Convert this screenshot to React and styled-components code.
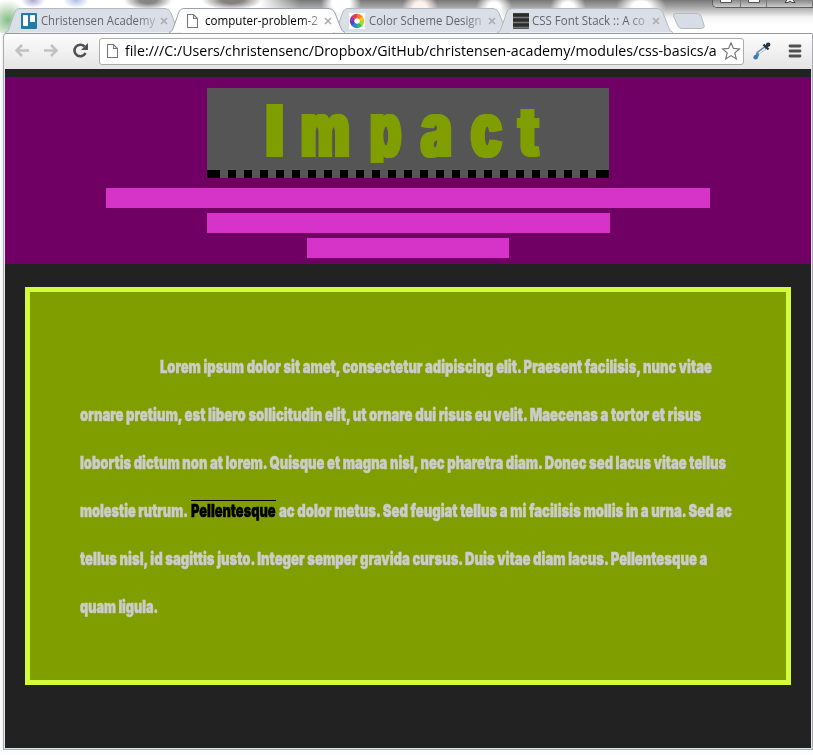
import React, { useLayoutEffect, useRef } from "react";
import styled, { createGlobalStyle } from "styled-components";

const Global = createGlobalStyle`
  * { box-sizing: border-box; }
  body { margin: 0; background: #fbfcfe; overflow: hidden; }
`;

const Desktop = styled.div`
  width: 813px;
  height: 755px;
  display: flex;
  flex-direction: column;
  overflow: hidden;
  font-family: "Open Sans", "Noto Sans", sans-serif;
  background: linear-gradient(90deg, #fff, #eef1f4 3px, #fff 5px) no-repeat 0 0 / 5px 748px, #fcfdff;
`;

const TitleBar = styled.div`
  flex: none;
  height: 33px;
  display: flex;
  align-items: flex-end;
  justify-content: space-between;
  background:
    radial-gradient(ellipse 20px 20px at 8px 20px, #86bd85, #a6d0a500 ),
    radial-gradient(ellipse 12px 8px at 33px 0, #aaa5ce, #aaa5ce00),
    radial-gradient(ellipse 13px 8px at 76px 0, #aebde8, #aebde800),
    radial-gradient(ellipse 20px 19px at 341px 3px, #fff 45%, #fff0),
    radial-gradient(ellipse 18px 17px at 420px 8px, #fff3ef 35%, #fff0),
    radial-gradient(ellipse 18px 17px at 494px 8px, #fff 35%, #fff0),
    radial-gradient(ellipse 18px 17px at 568px 8px, #fff 35%, #fff0),
    radial-gradient(ellipse 25px 16px at 641px 7px, #fff 35%, #fff0),
    radial-gradient(ellipse 24px 10px at 148px 0, #858585 35%, #85858500),
    radial-gradient(ellipse 30px 10px at 232px 0, #858080 35%, #85808000),
    linear-gradient(90deg, #fff 260px, #fff0 300px),
    linear-gradient(#777 0, #a5a5a5 7px, #f3f3f3 17px, #fff 25px);
`;

const Tabs = styled.div`
  display: flex;
  height: 25px;
  padding-left: 5px;
`;

const TabBox = styled.div`
  position: relative;
  z-index: ${(p) => (p.$active ? 2 : 1)};
  width: 176px;
  height: 25px;
  margin-right: -12px;
  padding: 0 5px 0 16px;
  display: flex;
  align-items: center;
`;

const TabShape = styled.svg`
  position: absolute;
  inset: 0;
`;

const Favicon = styled.svg`
  position: relative;
  flex: none;
  width: 16px;
  height: 16px;
  margin-right: ${(p) => p.$gap}px;
`;

const TabTitle = styled.div`
  position: relative;
  flex: 1;
  height: 18px;
  font-size: 12px;
  line-height: 17px;
  color: ${(p) => (p.$active ? "#000" : "#63666b")};
  mask-image: linear-gradient(90deg, #000 82%, #0004 100%);
`;

const CloseMark = styled.svg`
  position: relative;
  flex: none;
  width: 8px;
  height: 8px;
  margin: 0 8px 0 3px;
`;

const NewTab = styled.svg`
  width: 34px;
  height: 18px;
  margin: 4px 0 0 11px;
`;

const WindowButtons = styled.div`
  align-self: flex-start;
  display: flex;
  width: 101px;
  height: 8px;
  overflow: hidden;
  border: 1px solid #5c5c5c;
  border-top: 0;
  border-right: 0;
  border-radius: 0 0 0 5px;
  background: #aaa;
`;

const WindowButton = styled.div`
  width: ${(p) => p.$width}px;
  height: 7px;
  display: flex;
  justify-content: center;
  border-right: 1px solid #777;
  background: linear-gradient(#888, #ccc);
`;

const Frame = styled.div`
  flex: none;
  width: 810px;
  height: 717px;
  margin-left: 3px;
  border: 1px solid #a9abae;
  border-top-color: #98999c;
  border-radius: 4px 2px 0 0;
  background: #eee;
`;

const Toolbar = styled.div`
  height: 35px;
  display: flex;
  align-items: center;
  padding: 0 9px 0 10px;
  background: linear-gradient(#fdfdfd, #e5e5e5);
  border-radius: 4px 2px 0 0;
  border-bottom: 1px solid #c6c6c8;
`;

const ToolIcon = styled.svg`
  flex: none;
  width: ${(p) => p.$width}px;
  height: 18px;
  margin-right: ${(p) => p.$gap}px;
`;

const AddressBar = styled.div`
  width: 645px;
  height: 27px;
  display: flex;
  align-items: center;
  padding: 0 2px 0 5px;
  margin-right: 9px;
  border: 1px solid #aaacaf;
  border-radius: 3px;
  background: #fff;
`;

const Url = styled.div`
  flex: none;
  width: 596px;
  height: 24px;
  font-size: 15px;
  line-height: 23px;
  color: #000;
`;

const Page = styled.main`
  height: 679px;
  margin: 0 0 0 1px;
  width: 806px;
  padding-top: 8px;
  background: #222;
  font-family: Inter, "Open Sans", sans-serif;
  box-shadow: 0 0 0 1px #e6e6e6;
`;

const Banner = styled.header`
  height: 187px;
  padding-top: 11px;
  display: flex;
  flex-direction: column;
  align-items: center;
  background: #700064;
`;

const Heading = styled.h1`
  width: 402px;
  height: 90px;
  margin: 0 0 10px;
  display: flex;
  padding-left: 56px;
  font-weight: 900;
  color: #819e00;
  background:
    linear-gradient(#000, #000) no-repeat left bottom / 5px 8px,
    linear-gradient(#000, #000) no-repeat right bottom / 5px 8px,
    repeating-linear-gradient(90deg, #000 0 8px, #555 8px 16px) no-repeat 5px 82px / 392px 8px,
    #555;
`;

const Glyph = styled.span`
  width: ${(p) => p.$width}px;
  margin: ${(p) => p.$drop}px ${(p) => p.$gap}px 0 0;
  height: 82px;
  line-height: 82px;
  font-size: ${(p) => p.$size}px;
  clip-path: inset(0 -10px ${(p) => 7 + p.$drop}px -10px);
  text-shadow: ${(p) => p.$spread}px 0 currentColor, -${(p) => p.$spread}px 0 currentColor;
`;

const Bar = styled.div`
  flex: none;
  width: ${(p) => p.$width}px;
  height: 20px;
  margin-bottom: 5px;
  background: #d633c9;
`;

const Article = styled.article`
  width: 766px;
  height: 398px;
  margin: 23px 0 0 20px;
  padding: 50px;
  border: 5px solid #d4fa3c;
  background: #819e00;
`;

const Line = styled.div`
  height: 48px;
  display: flex;
  padding-left: ${(p) => p.$indent || 0}px;
  gap: 3px;
  font-size: 18px;
  font-weight: 900;
  line-height: 49px;
  color: #ccc;
  -webkit-text-stroke: 0.45px currentColor;
`;

const Highlight = styled.span`
  height: 22px;
  margin-top: 14px;
  border-top: 1px solid #000;
  line-height: 19px;
  color: #000;
  -webkit-text-stroke-color: #000;
`;

const FitBox = styled.span`
  display: block;
  flex: none;
  width: ${(p) => p.$width}px;
  white-space: nowrap;
`;

const FitInner = styled.span`
  display: inline-block;
  transform-origin: 0 50%;
`;

// Condenses a run of text horizontally so that it fills the given width.
function Fit({ width, children }) {
  const ref = useRef(null);
  useLayoutEffect(() => {
    const el = ref.current;
    const apply = () => {
      el.style.transform = `scaleX(${width / el.offsetWidth})`;
    };
    apply();
    document.fonts.ready.then(apply);
  }, [width, children]);
  return (
    <FitBox $width={width}>
      <FitInner ref={ref}>{children}</FitInner>
    </FitBox>
  );
}

const PageMark = () => (
  <path d="M2.5 1.5h6l4 4v9h-10zM8.5 1.5v4h4" fill="#fff" stroke="#777" strokeWidth="1.1" />
);

const TrelloMark = () => (
  <>
    <rect width="16" height="16" rx="1" fill="#237ba5" />
    <rect x="2" y="2" width="5" height="11" rx="0.7" fill="#fff" />
    <rect x="9" y="2" width="5" height="7" rx="0.7" fill="#fff" />
  </>
);

const wheel = ["#f4c80d", "#a5d82e", "#30b965", "#2a87d8", "#4948c4", "#9c36b4", "#ed3847", "#f87b20"];

const WheelMark = () => (
  <>
    <rect width="16" height="16" fill="#fff" />
    {wheel.map((c, i) => (
      <circle key={c} cx="8" cy="8" r="5" fill="none" stroke={c} strokeWidth="4.4"
        strokeDasharray="4.1 27.4" transform={`rotate(${i * 45 - 45} 8 8)`} />
    ))}
  </>
);

const StackMark = () => (
  <>
    <rect width="16" height="16" fill="#555" />
    <path d="M0 2h16M0 7h16M0 12h16" stroke="#2c2c2c" strokeWidth="3" />
    <path d="M0 4.5h16M0 9.5h16M0 14.5h16" stroke="#777" />
  </>
);

const tabs = [
  { title: "Christensen Academy", width: 114, gap: 4, Mark: TrelloMark },
  { title: "computer-problem-2", width: 113, gap: 4, Mark: PageMark, active: true },
  { title: "Color Scheme Design", width: 113, gap: 4, Mark: WheelMark },
  { title: "CSS Font Stack :: A co", width: 113, gap: 3, Mark: StackMark },
];

function Tab({ title, width, gap, Mark, active }) {
  return (
    <TabBox $active={active}>
      <TabShape width="176" height="25" viewBox="0 0 176 25">
        <path
          d="M0 24.5C3 24 3.5 22 5 18L9.5 5Q11 .5 15 .5H160Q164 .5 166 5L171 18Q173 24 176 24.5"
          fill={active ? "#fdfdfd" : "#d9dee7"}
          stroke={active ? "#9da2aa" : "#b4b9c1"}
        />
      </TabShape>
      <Favicon $gap={gap} viewBox="0 0 16 16"><Mark /></Favicon>
      <TabTitle $active={active}><Fit width={width}>{title}</Fit></TabTitle>
      <CloseMark viewBox="0 0 8 8">
        <path d="M1 1l6 6M7 1L1 7" stroke="#aaacb0" strokeWidth="1.6" />
      </CloseMark>
    </TabBox>
  );
}

const glyphs = [
  { c: "I", width: 23, gap: 15, size: 73, drop: 2, spread: 0 },
  { c: "m", width: 49, gap: 20, size: 78, drop: 0, spread: 3 },
  { c: "p", width: 31, gap: 20, size: 78, drop: 0, spread: 3 },
  { c: "a", width: 31, gap: 19, size: 78, drop: 0, spread: 3 },
  { c: "c", width: 31, gap: 16, size: 78, drop: 0, spread: 3 },
  { c: "t", width: 21, gap: 0, size: 70, drop: 2, spread: 2.5 },
];

export default function App() {
  return (
    <Desktop>
      <Global />
      <TitleBar>
        <Tabs>
          {tabs.map((t) => <Tab key={t.title} {...t} />)}
          <NewTab viewBox="0 0 34 18">
            <path d="M4 1.5H25Q28 1.5 29 4L32 13Q33 16.500 29 16.500H10Q7 16.500 6 14L1.500 4Q1 1.500 4 1.500Z" fill="#d7dde7" stroke="#b6babf" />
          </NewTab>
        </Tabs>
        <WindowButtons>
          <WindowButton $width={28}><svg width="12" height="4"><path d="M.5 0v2.500h11V0" fill="#fff" stroke="#555" /></svg></WindowButton>
          <WindowButton $width={27}><svg width="12" height="4"><path d="M.5 0v2.500h11V0" fill="#fff" stroke="#555" /></svg></WindowButton>
          <WindowButton $width={46}><svg width="12" height="4"><path d="M3 0L1 2.500h3L6 1l2 1.500h3L9 0" fill="#fff" stroke="#444" /></svg></WindowButton>
        </WindowButtons>
      </TitleBar>
      <Frame>
        <Toolbar>
          <ToolIcon $width={16} $gap={13} viewBox="0 0 16 18">
            <path d="M15 8.500H3M8 3L2.500 8.500 8 14" fill="none" stroke="#c1c1c1" strokeWidth="2.500" />
          </ToolIcon>
          <ToolIcon $width={16} $gap={13} viewBox="0 0 16 18">
            <path d="M1 8.500h12M8 3L13.500 8.500 8 14" fill="none" stroke="#c1c1c1" strokeWidth="2.500" />
          </ToolIcon>
          <ToolIcon $width={17} $gap={10} viewBox="0 0 17 18">
            <path d="M13.500 11A5.800 5.800 0 1 1 12.500 4.500" fill="none" stroke="#505050" strokeWidth="2.600" />
            <path d="M16 1V8H9z" fill="#505050" />
          </ToolIcon>
          <AddressBar>
            <Favicon $gap={4} viewBox="0 0 16 16"><PageMark /></Favicon>
            <Url><Fit width={592}>file:///C:/Users/christensenc/Dropbox/GitHub/christensen-academy/modules/css-basics/a</Fit></Url>
            <ToolIcon $width={20} $gap={0} viewBox="0 0 20 18">
              <path d="M10 .8l2.400 5.600 6 .5-4.600 4 1.500 6L10 13.600l-5.300 3.300 1.500-6-4.600-4 6-.5z" fill="#fff" stroke="#777" strokeWidth="1.200" />
            </ToolIcon>
          </AddressBar>
          <ToolIcon $width={18} $gap={17} viewBox="0 0 18 18">
            <path d="M12.500 5.500L5 11 3.500 15" fill="none" stroke="#6d8295" strokeWidth="3.400" />
            <path d="M12 6.500L5.500 11.500" stroke="#e1eef8" strokeWidth="1.600" />
            <path d="M5.500 11.500L3 15" stroke="#438ad2" strokeWidth="2" />
            <path d="M10.500 2.500l5 5M12.500 5l3-2.500" stroke="#26343f" strokeWidth="2.400" />
            <circle cx="15.200" cy="2.600" r="2.200" fill="#26343f" />
            <circle cx="2.700" cy="15.300" r="2.300" fill="#3d78b5" />
          </ToolIcon>
          <ToolIcon $width={14} $gap={0} viewBox="0 0 14 18">
            <path d="M2 4h10M2 9h10M2 14h10" stroke="#505050" strokeWidth="2.800" strokeLinecap="round" />
          </ToolIcon>
        </Toolbar>
        <Page>
          <Banner>
            <Heading>
              {glyphs.map((g) => (
                <Glyph key={g.c} $width={g.width} $gap={g.gap} $size={g.size} $drop={g.drop} $spread={g.spread}>
                  <Fit width={g.width}>{g.c}</Fit>
                </Glyph>
              ))}
            </Heading>
            <Bar $width={604} />
            <Bar $width={403} />
            <Bar $width={202} />
          </Banner>
          <Article>
            <Line $indent={80}><Fit width={552}>Lorem ipsum dolor sit amet, consectetur adipiscing elit. Praesent facilisis, nunc vitae</Fit></Line>
            <Line><Fit width={621}>ornare pretium, est libero sollicitudin elit, ut ornare dui risus eu velit. Maecenas a tortor et risus</Fit></Line>
            <Line><Fit width={646}>lobortis dictum non at lorem. Quisque et magna nisl, nec pharetra diam. Donec sed lacus vitae tellus</Fit></Line>
            <Line>
              <Fit width={108}>molestie rutrum.</Fit>
              <Highlight><Fit width={85}>Pellentesque</Fit></Highlight>
              <Fit width={453}>ac dolor metus. Sed feugiat tellus a mi facilisis mollis in a urna. Sed ac</Fit>
            </Line>
            <Line><Fit width={627}>tellus nisl, id sagittis justo. Integer semper gravida cursus. Duis vitae diam lacus. Pellentesque a</Fit></Line>
            <Line><Fit width={78}>quam ligula.</Fit></Line>
          </Article>
        </Page>
      </Frame>
    </Desktop>
  );
}
